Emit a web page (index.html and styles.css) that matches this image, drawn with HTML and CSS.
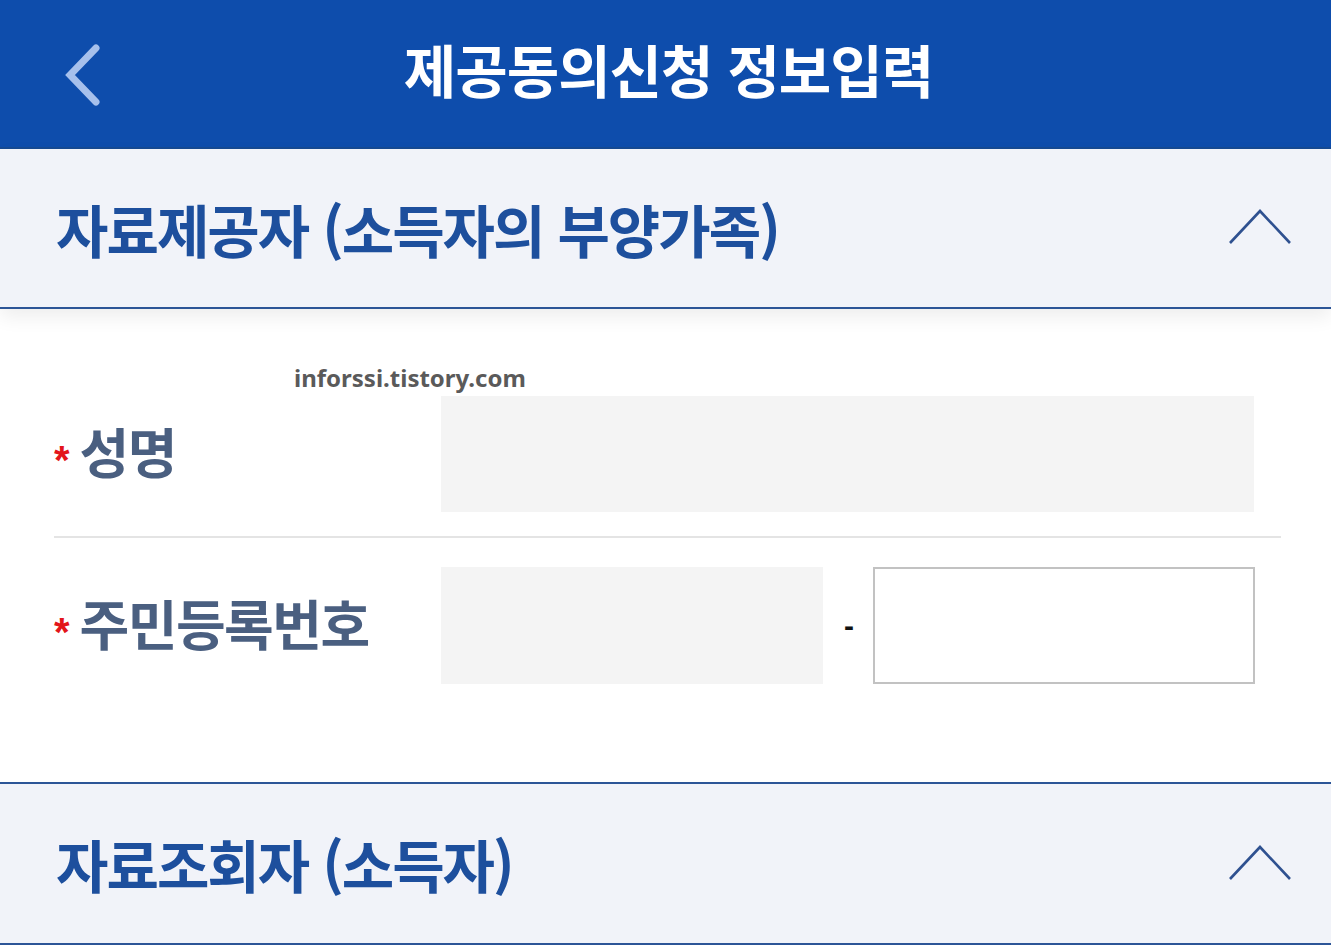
FILE: index.html
```html
<!DOCTYPE html>
<html lang="ko">
<head>
<meta charset="utf-8">
<title>제공동의신청 정보입력</title>
<link rel="stylesheet" href="styles.css">
</head>
<body>
<header class="topbar">
  <button class="back" aria-label="뒤로">
    <svg width="40" height="64" viewBox="0 0 40 64"><path d="M34 5 L8 32 L34 59" fill="none" stroke="#a6c0ec" stroke-width="7" stroke-linecap="round" stroke-linejoin="miter"/></svg>
  </button>
  <h1 class="topbar-title">제공동의신청 정보입력</h1>
</header>

<section class="panel">
  <div class="panel-head">
    <h2 class="panel-title">자료제공자 (소득자의 부양가족)</h2>
    <svg class="chev" width="62" height="36" viewBox="0 0 62 36"><path d="M1 35 L31 3 L61 35" fill="none" stroke="#2f5190" stroke-width="2.6"/></svg>
  </div>
  <div class="panel-body">
    <div class="watermark">inforssi.tistory.com</div>
    <div class="row">
      <div class="label"><span class="req">*</span>성명</div>
      <div class="fields"><div class="box box-grey box-full"></div></div>
    </div>
    <div class="row row-sep">
      <div class="label"><span class="req">*</span>주민등록번호</div>
      <div class="fields">
        <div class="box box-grey box-half"></div>
        <span class="dash">-</span>
        <div class="box box-white box-half"></div>
      </div>
    </div>
  </div>
</section>

<section class="panel">
  <div class="panel-head panel-head-top">
    <h2 class="panel-title">자료조회자 (소득자)</h2>
    <svg class="chev" width="62" height="36" viewBox="0 0 62 36"><path d="M1 35 L31 3 L61 35" fill="none" stroke="#2f5190" stroke-width="2.6"/></svg>
  </div>
</section>
</body>
</html>
```

FILE: styles.css
```css
html, body {
  margin: 0;
  padding: 0;
  background: #ffffff;
  font-family: "Noto Sans CJK KR", "Noto Sans", sans-serif;
}

.topbar {
  position: relative;
  height: 147px;
  background: #0e4dac;
  border-bottom: 2px solid #164a93;
  display: flex;
  align-items: center;
  justify-content: center;
}

.back {
  position: absolute;
  left: 62px;
  top: 43px;
  padding: 0;
  margin: 0;
  border: 0;
  background: transparent;
  display: block;
  line-height: 0;
}

.topbar-title {
  margin: -10px 0 0 6px;
  color: #ffffff;
  font-size: 57px;
  font-weight: 700;
  letter-spacing: -1px;
  line-height: 1;
}

.panel-head {
  height: 158px;
  background: #f1f3f9;
  border-bottom: 2px solid #2c5597;
  display: flex;
  align-items: center;
  justify-content: space-between;
  padding: 0 40px 0 56px;
  position: relative;
  z-index: 1;
  box-shadow: 0 8px 18px rgba(0, 0, 0, 0.07);
}

.panel-head-top {
  border-top: 2px solid #2c5597;
  height: 159px;
  box-shadow: none;
}

.panel-title {
  margin: 0;
  color: #1d4f9d;
  font-size: 57px;
  font-weight: 700;
  letter-spacing: -2px;
  line-height: 1;
}

.chev {
  display: block;
  margin-top: -4px;
}

.panel-body {
  padding: 54px 50px 98px 54px;
}

.watermark {
  margin-left: 240px;
  font-family: "Noto Sans", "Open Sans", sans-serif;
  font-weight: 700;
  font-size: 24px;
  line-height: 30px;
  color: #5a5a5a;
  margin-bottom: 3px;
}

.row {
  display: flex;
  align-items: center;
  padding-bottom: 24px;
}

.row-sep {
  border-top: 2px solid #e4e4e4;
  padding-top: 29px;
  padding-bottom: 0;
}

.label {
  width: 387px;
  flex: none;
  display: flex;
  align-items: center;
  color: #4a5f80;
  font-size: 54px;
  font-weight: 700;
  letter-spacing: -1.5px;
  line-height: 1;
  padding-bottom: 6px;
  box-sizing: border-box;
}

.req {
  color: #e3151b;
  font-family: "Liberation Sans", sans-serif;
  font-size: 40px;
  letter-spacing: 0;
  margin-right: 10px;
  margin-top: 18px;
}

.fields {
  flex: 1;
  display: flex;
  align-items: center;
  padding-right: 27px;
}

.box {
  height: 117px;
  box-sizing: border-box;
}

.box-full {
  flex: 1;
  height: 116px;
}

.box-half {
  width: 382px;
  flex: none;
}

.box-grey {
  background: #f4f4f4;
}

.box-white {
  background: #ffffff;
  border: 2px solid #c2c2c2;
  height: 117px;
}

.dash {
  width: 50px;
  text-align: center;
  font-family: "Liberation Sans", sans-serif;
  font-size: 30px;
  font-weight: 700;
  color: #111111;
  padding-left: 2px;
  box-sizing: border-box;
}
```
